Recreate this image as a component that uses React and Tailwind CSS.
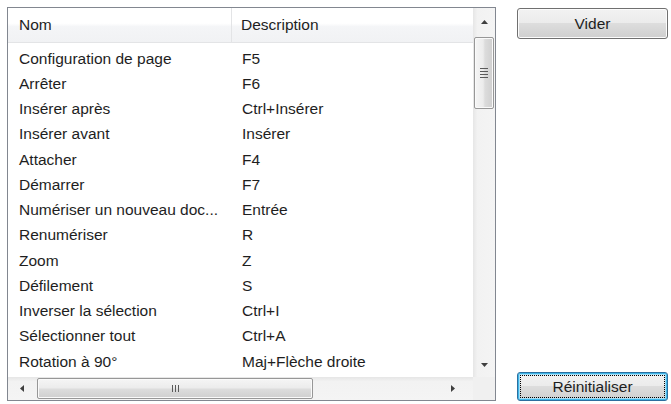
import React from "react";

const rows = [
  ["Configuration de page", "F5"],
  ["Arrêter", "F6"],
  ["Insérer après", "Ctrl+Insérer"],
  ["Insérer avant", "Insérer"],
  ["Attacher", "F4"],
  ["Démarrer", "F7"],
  ["Numériser un nouveau doc...", "Entrée"],
  ["Renumériser", "R"],
  ["Zoom", "Z"],
  ["Défilement", "S"],
  ["Inverser la sélection", "Ctrl+I"],
  ["Sélectionner tout", "Ctrl+A"],
  ["Rotation à 90°", "Maj+Flèche droite"],
];

const Tri = ({ dir }) => {
  const pts = {
    up: "0,4 3.5,0 7,4",
    down: "0,0 7,0 3.5,4",
    left: "4,0 4,7 0,3.5",
    right: "0,0 0,7 4,3.5",
  }[dir];
  const vertical = dir === "up" || dir === "down";
  return (
    <svg width={vertical ? 7 : 4} height={vertical ? 4 : 7} viewBox={vertical ? "0 0 7 4" : "0 0 4 7"}>
      <polygon points={pts} fill="#3f3f3f" />
    </svg>
  );
};

export default function App() {
  return (
    <div
      className="w-[671px] h-[404px] bg-white flex pl-[7px] pt-[7px] text-[#1e1e1e]"
      style={{ fontFamily: '"Liberation Sans", Arial, sans-serif' }}
    >
      {/* List box */}
      <div className="w-[489px] h-[394px] border border-[#828790] flex flex-col bg-white">
        <div className="flex flex-1 min-h-0">
          {/* list content */}
          <div className="flex-1 flex flex-col overflow-hidden">
            <div className="h-[35px] shrink-0 flex bg-[linear-gradient(to_bottom,#ffffff_0%,#ffffff_45%,#f4f5f7_55%,#f1f2f4_100%)] border-b border-[#e3e4e6] text-[15.5px]">
              <div className="w-[224px] shrink-0 border-r border-[#e3e4e6] pl-[11px] flex items-center">
                Nom
              </div>
              <div className="pl-[9px] flex items-center">Description</div>
            </div>
            <div className="pt-[2.5px] flex flex-col text-[15.5px]">
              {rows.map(([n, d]) => (
                <div key={n} className="h-[25.25px] flex items-center shrink-0">
                  <div className="w-[224px] shrink-0 pl-[11px] whitespace-nowrap overflow-hidden">{n}</div>
                  <div className="pl-[10px] whitespace-nowrap">{d}</div>
                </div>
              ))}
            </div>
          </div>
          {/* vertical scrollbar */}
          <div className="w-[22px] shrink-0 flex flex-col bg-[linear-gradient(to_right,#e6e6e6_0%,#f2f2f2_20%,#f4f4f4_100%)]">
            <div className="h-[27px] flex items-center justify-center shrink-0 pt-[1px]">
              <Tri dir="up" />
            </div>
            <div className="h-[72px] mx-[1px] mt-[2px] rounded-[2px] border border-[#979797] bg-[linear-gradient(to_right,#f5f5f5_0%,#ececec_45%,#dcdcdc_55%,#cfcfcf_100%)] shadow-[inset_0_0_0_1px_#fafafa] flex flex-col items-center justify-center gap-[2px] shrink-0">
              <div className="w-[8px] h-[1px] bg-[#5a5a5a]" />
              <div className="w-[8px] h-[1px] bg-[#5a5a5a]" />
              <div className="w-[8px] h-[1px] bg-[#5a5a5a]" />
              <div className="w-[8px] h-[1px] bg-[#5a5a5a]" />
            </div>
            <div className="flex-1" />
            <div className="h-[22px] flex items-center justify-center shrink-0 pb-[2px]">
              <Tri dir="down" />
            </div>
          </div>
        </div>
        {/* horizontal scrollbar */}
        <div className="h-[23px] shrink-0 flex bg-[linear-gradient(to_bottom,#e6e6e6_0%,#f2f2f2_20%,#f4f4f4_100%)]">
          <div className="w-[27px] shrink-0 flex items-center justify-center">
            <Tri dir="left" />
          </div>
          <div className="w-[276px] shrink-0 my-[1px] ml-[2px] rounded-[2px] border border-[#979797] bg-[linear-gradient(to_bottom,#f5f5f5_0%,#ececec_45%,#dcdcdc_55%,#cfcfcf_100%)] shadow-[inset_0_0_0_1px_#fafafa] flex items-center justify-center gap-[2px]">
            <div className="w-[1px] h-[7px] bg-[#5a5a5a]" />
            <div className="w-[1px] h-[7px] bg-[#5a5a5a]" />
            <div className="w-[1px] h-[7px] bg-[#5a5a5a]" />
          </div>
          <div className="flex-1" />
          <div className="w-[40px] shrink-0 flex items-center justify-center">
            <Tri dir="right" />
          </div>
          <div className="w-[22px] shrink-0 bg-[#f0f0f0]" />
        </div>
      </div>

      {/* Buttons */}
      <div className="ml-[21px] w-[151px] pt-[1px] pb-[3px] flex flex-col justify-between h-[397px]">
        <button className="h-[31px] w-full rounded-[3px] border border-[#707070] bg-[linear-gradient(to_bottom,#f2f2f2_0%,#ebebeb_50%,#dddddd_50%,#cfcfcf_100%)] shadow-[inset_0_0_0_1px_#fcfcfc] text-[15.5px] text-[#1e1e1e] flex items-center justify-center">
          Vider
        </button>
        <button className="h-[29px] w-full rounded-[3px] border border-[#2c6f9f] bg-[linear-gradient(to_bottom,#f2f2f2_0%,#ebebeb_50%,#dddddd_50%,#cfcfcf_100%)] shadow-[inset_0_0_0_1px_#3fb6e8,inset_0_0_0_2px_#a9def5] outline-1 outline-dotted outline-black -outline-offset-[4px] text-[15.5px] text-[#1e1e1e] flex items-center justify-center">
          Réinitialiser
        </button>
      </div>
    </div>
  );
}
